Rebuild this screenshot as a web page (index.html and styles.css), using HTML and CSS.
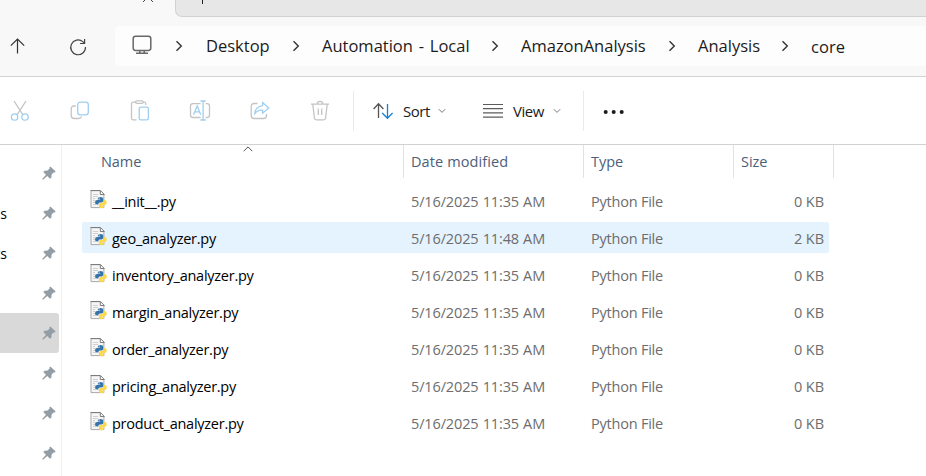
FILE: index.html
```
<!DOCTYPE html>
<html lang="en">
<head>
<meta charset="utf-8">
<title>core</title>
<link rel="stylesheet" href="styles.css">
</head>
<body>
<svg class="defs" width="0" height="0">
  <symbol id="chev" viewBox="0 0 8 12"><path d="M1.5 1.2 6.3 6 1.5 10.8" fill="none" stroke="#333" stroke-width="1.4"/></symbol>
  <symbol id="down" viewBox="0 0 8 6"><path d="M.8 1.2 4 4.4 7.2 1.2" fill="none" stroke="#777" stroke-width="1"/></symbol>
  <symbol id="pin" viewBox="0 0 14 14"><path d="M8.3.4 13.7 5.5 12.6 6.6 11.5 6.4 9.6 8.6 9.4 11.6 8 12.7 5.2 10 1.3 13.4 .3 13.4 .6 12.4 4 8.8 1.3 6 2.6 4.7 5.5 4.6 7.6 2.6 7.3 1.4Z" fill="#939da5"/></symbol>
  <symbol id="py" viewBox="0 0 17 19">
    <path d="M1 .7H10.2L13.9 4.4V17.6H1Z" fill="#f6f6f6" stroke="#a8a8a8"/>
    <path d="M.5.5H10.4L14.3 4.5H10.3V.8" fill="#fff" stroke="#7c7c7c"/>
    <path d="M3 4.5H8M3 6.5H8M3 8.5H5M3 10.5H5M3 12.5H5M3 14.5H6" stroke="#d0d0d0"/>
    <path d="M7.8 8.6Q7.8 6.9 10.4 6.9Q13.2 6.9 13.2 8.8V10.8Q13.2 12.4 11.5 12.4H9.8Q8.3 12.4 8.3 14.6H7Q5 14.4 5 12.2Q5 9.9 7.2 9.9H10.2V9.4H7.8Z" fill="#3673a8"/>
    <path d="M13.9 10H14.9Q16.8 10.3 16.8 12.6Q16.8 14.9 14.8 14.9H11.9V15.4H14.2V16.6Q14.2 18.2 11.6 18.2Q8.9 18.2 8.9 16.5V14.7Q8.9 13 10.7 13H12.2Q13.9 13 13.9 11.3Z" fill="#fcd94b"/>
    <circle cx="9.2" cy="8.1" r=".5" fill="#fff"/>
  </symbol>
</svg>
<div class="window">
  <div class="tabs">
    <div class="tab"><svg width="12" height="6" viewBox="0 0 12 6"><path d="M1 5 6 0 11 5" fill="none" stroke="#444"/></svg></div>
    <div class="strip"><span class="plus"></span></div>
  </div>
  <nav class="nav">
    <svg class="up" width="16" height="16" viewBox="0 0 16 16" fill="none" stroke="#333" stroke-width="1.2"><path d="M7.5 15.5V1.5M.8 7.7 7.5 1 14.2 7.7"/></svg>
    <svg class="refresh" width="18" height="18" viewBox="0 0 18 18" fill="none" stroke="#444" stroke-width="1.2"><path d="M16.5 9A7.4 7.4 0 1 1 13.8 3.6L15.5 5.4M15.6 1V5.5H11"/></svg>
    <div class="address">
      <svg class="monitor" width="20" height="20" viewBox="0 0 20 20" fill="none" stroke="#686868" stroke-width="1.5"><rect x="1.2" y="1.2" width="17.6" height="14.2" rx="2.4"/><path d="M7.8 16V18M12.2 16V18M4 18.2H16"/></svg>
      <svg class="chev"><use href="#chev"/></svg><span class="c1">Desktop</span>
      <svg class="chev"><use href="#chev"/></svg><span class="c2">Automation - Local</span>
      <svg class="chev"><use href="#chev"/></svg><span class="c3">AmazonAnalysis</span>
      <svg class="chev"><use href="#chev"/></svg><span class="c4">Analysis</span>
      <svg class="chev"><use href="#chev"/></svg><span class="c5">core</span>
    </div>
  </nav>
  <div class="toolbar">
    <svg class="tool" viewBox="0 0 24 24"><path class="g" d="M6 2 14.8 15.6M18 2 9.2 15.6"/><g class="b"><circle cx="6.6" cy="18" r="3.2"/><circle cx="17" cy="18" r="3.2"/></g></svg>
    <svg class="tool" viewBox="0 0 24 24"><path class="g" d="M7.8 7H6.2Q3.2 7 3.2 10V16.5Q3.2 19.5 6.2 19.5H10.5Q12.8 19.5 13.6 17.6"/><rect class="b" x="9.7" y="3.2" width="10.6" height="12.6" rx="2.6"/></svg>
    <svg class="tool" viewBox="0 0 24 24"><path class="g" d="M8.5 20.8H5.2Q3.5 20.8 3.5 19.2V4.8Q3.5 3.2 5.2 3.2H7.5M15 3.2H16.2Q17.8 3.2 17.8 4.8V6M9 1.9H14Q15.2 1.9 15.2 3.1T14 4.4H9Q7.6 4.4 7.6 3.1T9 1.9Z"/><rect class="b" x="11.2" y="8.2" width="9.2" height="12.6" rx="1.6"/></svg>
    <svg class="tool" viewBox="0 0 24 24"><path class="g" d="M12.6 4.6H5Q2.5 4.6 2.5 7.1V16Q2.5 18.5 5 18.5H12.6M17.7 4.6H19Q21.5 4.6 21.5 7.1V16Q21.5 18.5 19 18.5H17.7"/><path class="b" d="M5.5 15.8 9.2 7 12.7 15.8M6.7 12.8H11.5M12.4 2H17.8M15.1 2V21M12.4 21H17.8"/></svg>
    <svg class="tool" viewBox="0 0 24 24"><path class="g" d="M9.5 4.5H6.2Q3.2 4.5 3.2 7.5V16.5Q3.2 19.5 6.2 19.5H15.5Q18.5 19.5 18.5 16.5V15"/><path class="b" d="M14.6 3.6 20.8 9 14.6 14.2V11.2Q10 10.8 6.8 14.6Q7.3 7.6 14.6 6.6Z"/></svg>
    <svg class="tool" viewBox="0 0 24 24"><path class="g" d="M3 5.2H21M4.8 5.2 6.4 19Q6.6 20.8 8.4 20.8H15.6Q17.4 20.8 17.6 19L19.2 5.2M9.2 5Q9.2 2.4 12 2.4T14.8 5M10.3 9.5V16M13.7 9.5V16"/></svg>
    <div class="group sort">
      <svg width="20" height="18" viewBox="0 0 20 18" fill="none" stroke-width="1.3"><path d="M5.5 16V2M.6 7 5.5 1.8 10.4 7" stroke="#555"/><path d="M14.5 2V16M9.2 11 14.5 16.3 19.6 11" stroke="#1681d4"/></svg>
      <span>Sort</span><svg class="down"><use href="#down"/></svg>
    </div>
    <div class="group view">
      <svg width="20" height="14" viewBox="0 0 20 14"><path d="M0 .5H20M0 4.7H20M0 8.9H20M0 13.2H20" stroke="#5c5c5c" stroke-width="1.2"/></svg>
      <span>View</span><svg class="down"><use href="#down"/></svg>
    </div>
    <div class="group more"><svg width="22" height="6" viewBox="0 0 22 6" fill="#1b1b1b"><circle cx="2.7" cy="3" r="2"/><circle cx="10.7" cy="3" r="2"/><circle cx="18.7" cy="3" r="2"/></svg></div>
  </div>
  <div class="body">
    <aside class="side">
      <div class="item"><svg><use href="#pin"/></svg></div>
      <div class="item"><span>s</span><svg><use href="#pin"/></svg></div>
      <div class="item"><span>ts</span><svg><use href="#pin"/></svg></div>
      <div class="item"><svg><use href="#pin"/></svg></div>
      <div class="item current"><svg><use href="#pin"/></svg></div>
      <div class="item"><svg><use href="#pin"/></svg></div>
      <div class="item"><svg><use href="#pin"/></svg></div>
      <div class="item"><svg><use href="#pin"/></svg></div>
    </aside>
    <main class="files">
      <div class="head">
        <div class="hname">Name<svg class="asc" width="10" height="6" viewBox="0 0 10 6"><path d="M.7 5.2 5 .9 9.3 5.2" fill="none" stroke="#555"/></svg></div>
        <div class="hdate">Date modified</div><div>Type</div><div>Size</div>
      </div>
      <div class="row"><svg><use href="#py"/></svg><span class="name">__init__.py</span><span class="date">5/16/2025 11:35 AM</span><span class="type">Python File</span><span class="size">0 KB</span></div>
      <div class="row selected"><svg><use href="#py"/></svg><span class="name">geo_analyzer.py</span><span class="date">5/16/2025 11:48 AM</span><span class="type">Python File</span><span class="size">2 KB</span></div>
      <div class="row"><svg><use href="#py"/></svg><span class="name">inventory_analyzer.py</span><span class="date">5/16/2025 11:35 AM</span><span class="type">Python File</span><span class="size">0 KB</span></div>
      <div class="row"><svg><use href="#py"/></svg><span class="name">margin_analyzer.py</span><span class="date">5/16/2025 11:35 AM</span><span class="type">Python File</span><span class="size">0 KB</span></div>
      <div class="row"><svg><use href="#py"/></svg><span class="name">order_analyzer.py</span><span class="date">5/16/2025 11:35 AM</span><span class="type">Python File</span><span class="size">0 KB</span></div>
      <div class="row"><svg><use href="#py"/></svg><span class="name">pricing_analyzer.py</span><span class="date">5/16/2025 11:35 AM</span><span class="type">Python File</span><span class="size">0 KB</span></div>
      <div class="row"><svg><use href="#py"/></svg><span class="name">product_analyzer.py</span><span class="date">5/16/2025 11:35 AM</span><span class="type">Python File</span><span class="size">0 KB</span></div>
    </main>
  </div>
</div>
</body>
</html>
```
FILE: styles.css
```
* { box-sizing: border-box; }
body { margin: 0; overflow: hidden; background: #fff; font-family: "Segoe UI", "Open Sans", "Noto Sans", sans-serif; font-size: 14px; color: #1b1b1b; }
svg { display: block; flex: none; }
.defs { position: absolute; }
.window { width: 926px; height: 476px; display: flex; flex-direction: column; }

.tabs { display: flex; height: 17px; background: #f8f8f8; flex: none; }
.tab { width: 175px; padding: 0 0 0 142px; overflow: hidden; }
.tab svg { margin-top: -3px; }
.strip { flex: 1; background: #e7e7e7; border: solid #d2d2d2; border-width: 0 0 1px 1px; border-bottom-left-radius: 7px; }
.plus { display: block; width: 1px; height: 4px; margin-left: 26px; background: #222; }

.nav { display: flex; height: 60px; flex: none; background: #f8f8f8; border-bottom: 1px solid #d2d2d2; }
.up { margin: 21px 0 0 10px; }
.refresh { margin: 21px 0 0 43px; }
.address { flex: 1; height: 40px; margin: 9px 0 0 28px; background: #fdfdfd; border-radius: 5px 0 0 5px; display: grid; grid-template-columns: 17px 43px 31px 86px 30px 169px 30px 147px 30px 83px 30px 100px; align-items: center; font-size: 16.5px; line-height: 24px; white-space: nowrap; }
.address .monitor { grid-column: 2; margin-top: -2px; }
.address .chev { width: 8px; height: 12px; }
.address span { letter-spacing: 0; }
.address .c2 { letter-spacing: 0; word-spacing: 1.5px; }
.address .c5 { padding-top: 2px; letter-spacing: 0.1px; }

.toolbar { display: flex; height: 68px; flex: none; border-bottom: 1px solid #d2d2d2; padding: 14px 0 0 8px; }
.tool { width: 24px; height: 24px; margin: 8px 36px 0 0; fill: none; stroke-width: 1.3; }
.tool:nth-child(6) { margin-right: 21px; }
.g { stroke: #c4c4c4; }
.b { stroke: #9fcfef; }
.group { display: flex; align-items: center; height: 40px; font-size: 15px; }
.sort { border-left: 1px solid #eaeaea; padding-left: 19px; }
.sort span { width: 35px; margin-left: 10px; letter-spacing: -0.5px; }
.view { padding-left: 37px; }
.view span { width: 40px; margin-left: 10px; letter-spacing: -0.5px; }
.down { width: 8px; height: 6px; }
.more { margin-left: 22px; border-left: 1px solid #eaeaea; padding: 2px 0 0 19px; }

.body { display: flex; flex: 1; min-height: 0; }
.side { width: 62px; border-right: 1px solid #f0f0f0; padding-top: 8px; }
.item { display: flex; align-items: center; justify-content: flex-end; width: 59px; height: 40px; padding-right: 3px; color: #000; }
.item span { flex: 1; width: 8px; direction: rtl; margin-right: 35px; }
.item svg { width: 14px; height: 14px; }
.current { background: #d9d9d9; border-radius: 0 3px 3px 0; }

.files { flex: 1; padding-left: 20px; }
.head { display: grid; grid-template-columns: 322px 180px 150px 100px; height: 33px; margin-bottom: 7px; line-height: 33px; color: #4c607a; font-size: 14.5px; }
.head div { border-right: 1px solid #e2e2e2; padding-left: 7px; letter-spacing: -0.05px; }
.head .hname { display: flex; padding-left: 19px; }
.head .hdate { letter-spacing: 0.1px; }
.asc { margin: 1px 0 0 102px; }
.row { display: flex; align-items: center; width: 747px; height: 31px; margin-bottom: 6px; border-radius: 2px; color: #6d6d6d; font-size: 14.5px; white-space: nowrap; }
.row svg { width: 17px; height: 19px; margin: -2px 5px 0 8px; }
.row span { padding-top: 2px; }
.name { width: 299px; color: #000; letter-spacing: -0.26px; }
.date { width: 180px; letter-spacing: -0.13px; word-spacing: 0.5px; }
.type { width: 150px; letter-spacing: -0.22px; }
.size { flex: 1; text-align: right; padding-right: 5px; letter-spacing: -0.05px; }
.selected { background: #e5f3ff; }
```
